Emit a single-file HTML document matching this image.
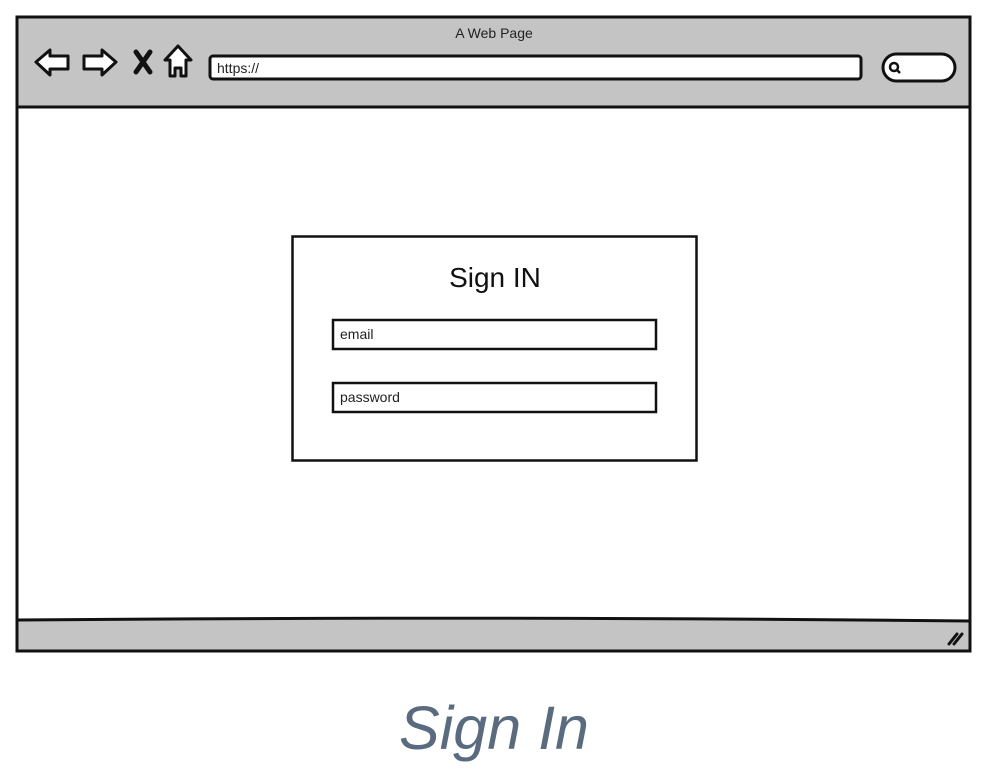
<!DOCTYPE html>
<html><head><style>
html,body{margin:0;padding:0;background:#fff;width:996px;height:772px;overflow:hidden}
svg{display:block}
</style></head><body>
<svg width="996" height="772" viewBox="0 0 996 772" xmlns="http://www.w3.org/2000/svg" font-family="Liberation Sans, sans-serif">
<rect x="17" y="17" width="953" height="634" fill="#fff" stroke="#111" stroke-width="3"/>
<rect x="18.5" y="18.5" width="950" height="88" fill="#c4c4c4"/>
<line x1="17" y1="107" x2="970" y2="107" stroke="#111" stroke-width="3"/>
<rect x="18.5" y="620" width="950" height="29.5" fill="#c4c4c4"/>
<path d="M17 620 Q500 616 970 621" fill="none" stroke="#111" stroke-width="3"/>
<text x="494" y="38" font-size="14" text-anchor="middle" fill="#222">A Web Page</text>
<path d="M36 62 L50 50 L50 56 L68 56 L68 69 L50 69 L50 75 Z" fill="#fff" stroke="#111" stroke-width="3" stroke-linejoin="round"/>
<path d="M116 62 L102 50 L102 56 L84 56 L84 69 L102 69 L102 75 Z" fill="#fff" stroke="#111" stroke-width="3" stroke-linejoin="round"/>
<path d="M136 52 L150 72 M150 52 L136 72" stroke="#111" stroke-width="5" stroke-linecap="round"/>
<path d="M178 46 L191 60 L186 60 L186 76 L181 76 L181 68 L175 68 L175 76 L170 76 L170 60 L165 60 Z" fill="#fff" stroke="#111" stroke-width="3" stroke-linejoin="round"/>
<rect x="210" y="56" width="651" height="23" rx="3" fill="#fff" stroke="#111" stroke-width="3"/>
<text x="217" y="73" font-size="14" fill="#222">https://</text>
<rect x="883" y="54" width="72" height="27" rx="13.5" fill="#fff" stroke="#111" stroke-width="3"/>
<circle cx="894" cy="67" r="4" fill="none" stroke="#111" stroke-width="2.5"/>
<line x1="897" y1="70" x2="900" y2="73" stroke="#111" stroke-width="2.5"/>
<path d="M949 644 L957 634 M954 644 L962 634" stroke="#111" stroke-width="3" stroke-linecap="round"/>
<rect x="292.5" y="236.5" width="404" height="224" fill="#fff" stroke="#111" stroke-width="2.5"/>
<text x="495" y="287" font-size="28" text-anchor="middle" fill="#111">Sign IN</text>
<rect x="333" y="320" width="323" height="29" fill="#fff" stroke="#111" stroke-width="2.5"/>
<text x="340" y="339" font-size="14" fill="#222">email</text>
<rect x="333" y="383" width="323" height="29" fill="#fff" stroke="#111" stroke-width="2.5"/>
<text x="340" y="402" font-size="14" fill="#222">password</text>
<text x="494" y="749" font-size="61" font-style="italic" text-anchor="middle" fill="#5b6b7f">Sign In</text>
</svg>
</body></html>
